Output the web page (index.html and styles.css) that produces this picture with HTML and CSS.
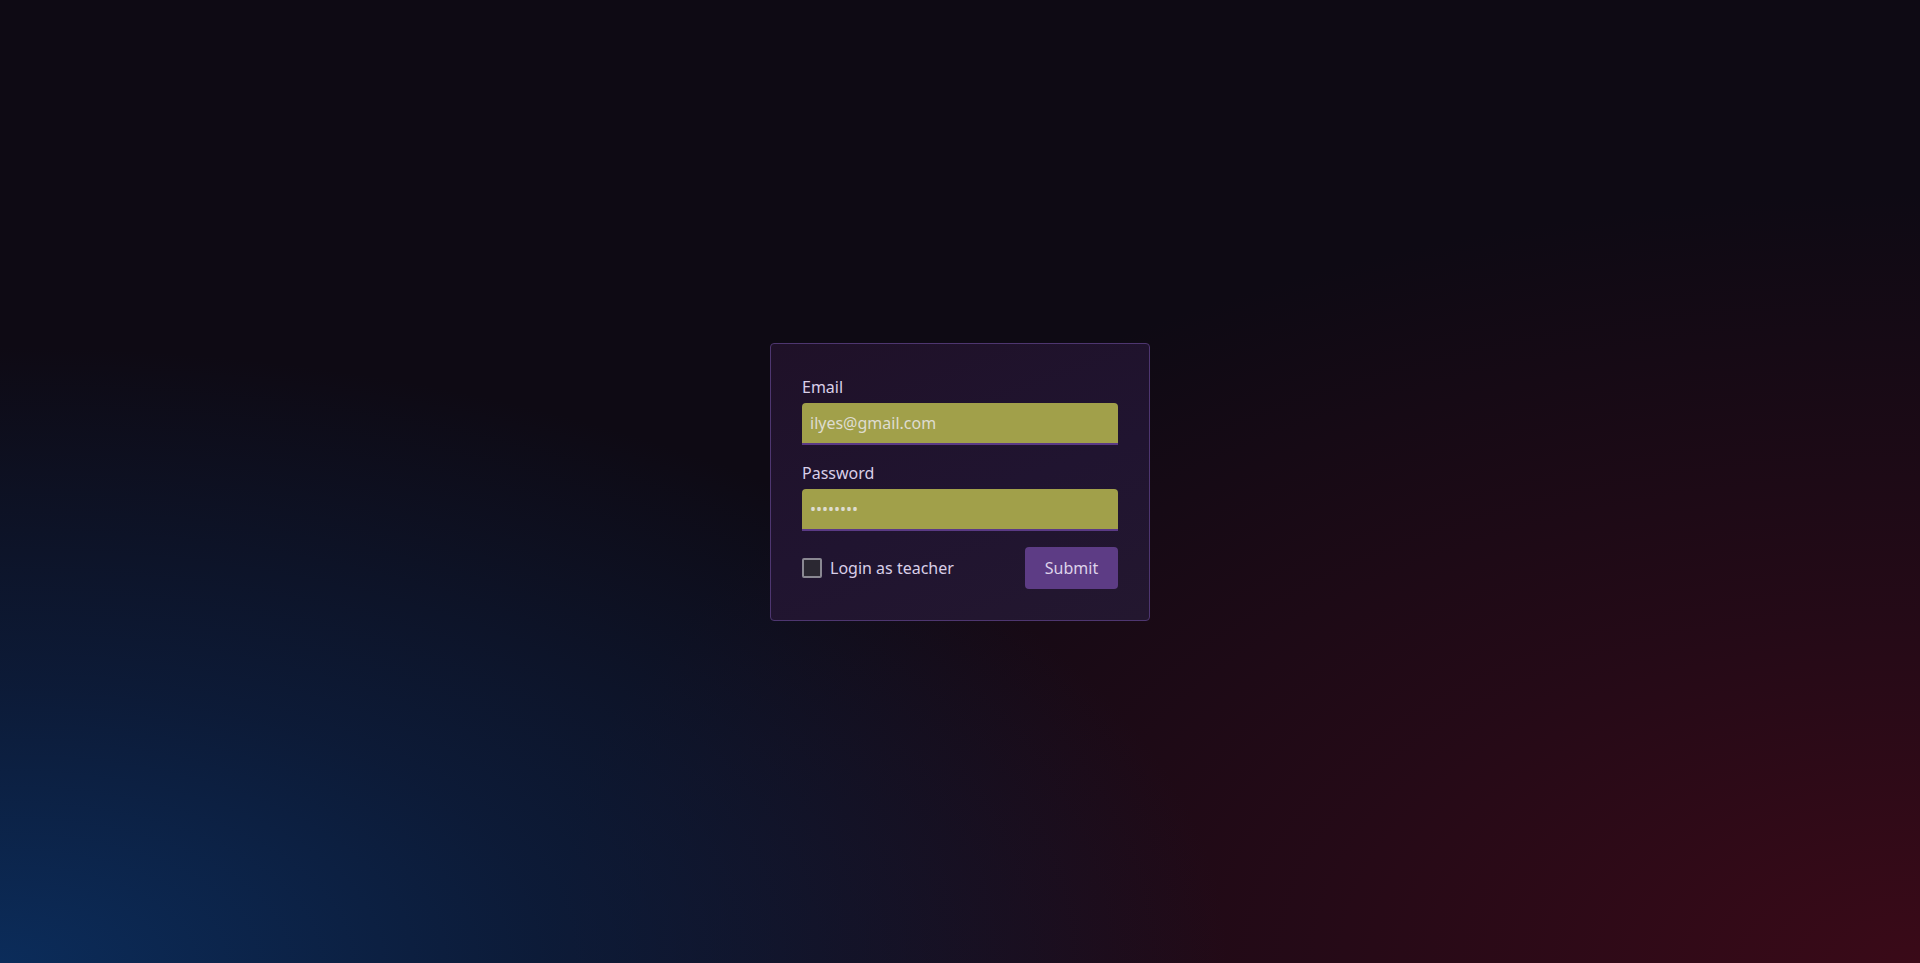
FILE: index.html
```html
<!DOCTYPE html>
<html lang="en">
<head>
<meta charset="utf-8">
<title>Login</title>
<link rel="stylesheet" href="styles.css">
</head>
<body>
<main class="page">
  <form class="card">
    <label class="label" for="email">Email</label>
    <input class="field" id="email" type="text" value="ilyes@gmail.com">
    <label class="label label-gap" for="password">Password</label>
    <input class="field" id="password" type="password" value="password">
    <div class="row">
      <label class="check">
        <span class="box"></span>
        <span class="check-text">Login as teacher</span>
      </label>
      <button class="submit" type="button">Submit</button>
    </div>
  </form>
</main>
</body>
</html>
```

FILE: styles.css
```css
* { box-sizing: border-box; }
html, body {
  margin: 0;
  height: 100%;
}
body {
  font-family: "Noto Sans", "Open Sans", sans-serif;
  background:
    radial-gradient(ellipse 64% 64% at 0% 100%, rgba(11, 46, 94, 0.95) 0%, rgba(11, 40, 84, 0.55) 45%, rgba(11, 30, 60, 0) 100%),
    radial-gradient(ellipse 72% 80% at 100% 100%, rgba(58, 10, 24, 1) 0%, rgba(45, 10, 24, 0.72) 45%, rgba(30, 10, 20, 0) 100%),
    #0e0a14;
  overflow: hidden;
}
.page {
  height: 100%;
  display: flex;
  align-items: center;
  justify-content: center;
}
.card {
  width: 380px;
  display: flex;
  flex-direction: column;
  padding: 31px 31px 31px;
  border: 1px solid #4e3670;
  border-radius: 4px;
  background: linear-gradient(160deg, #1f1128 0%, #201430 55%, #23172f 100%);
}
.label {
  font-size: 16px;
  line-height: 24px;
  color: #d9cfe8;
  margin-bottom: 4px;
}
.label-gap { margin-top: 16px; }
.field {
  height: 42px;
  width: 100%;
  border: none;
  border-bottom: 2px solid #5b3a86;
  border-radius: 4px 4px 0 0;
  background: #a1a04a;
  color: #dedcd0;
  font-family: "Noto Sans", "Open Sans", sans-serif;
  font-size: 16px;
  padding: 0 8px;
  outline: none;
}
.row {
  margin-top: 16px;
  display: flex;
  align-items: center;
  justify-content: space-between;
}
.check {
  display: flex;
  align-items: center;
  gap: 8px;
  color: #d9cfe8;
  font-size: 16px;
  line-height: 24px;
}
.box {
  width: 20px;
  height: 20px;
  border: 2px solid #8a8892;
  border-radius: 2px;
  background: #2b2832;
}
.submit {
  height: 42px;
  width: 93px;
  border: none;
  border-radius: 4px;
  background: #5d3c85;
  color: #ddd3ea;
  font-family: "Noto Sans", "Open Sans", sans-serif;
  font-size: 16px;
  padding: 0;
}
```
